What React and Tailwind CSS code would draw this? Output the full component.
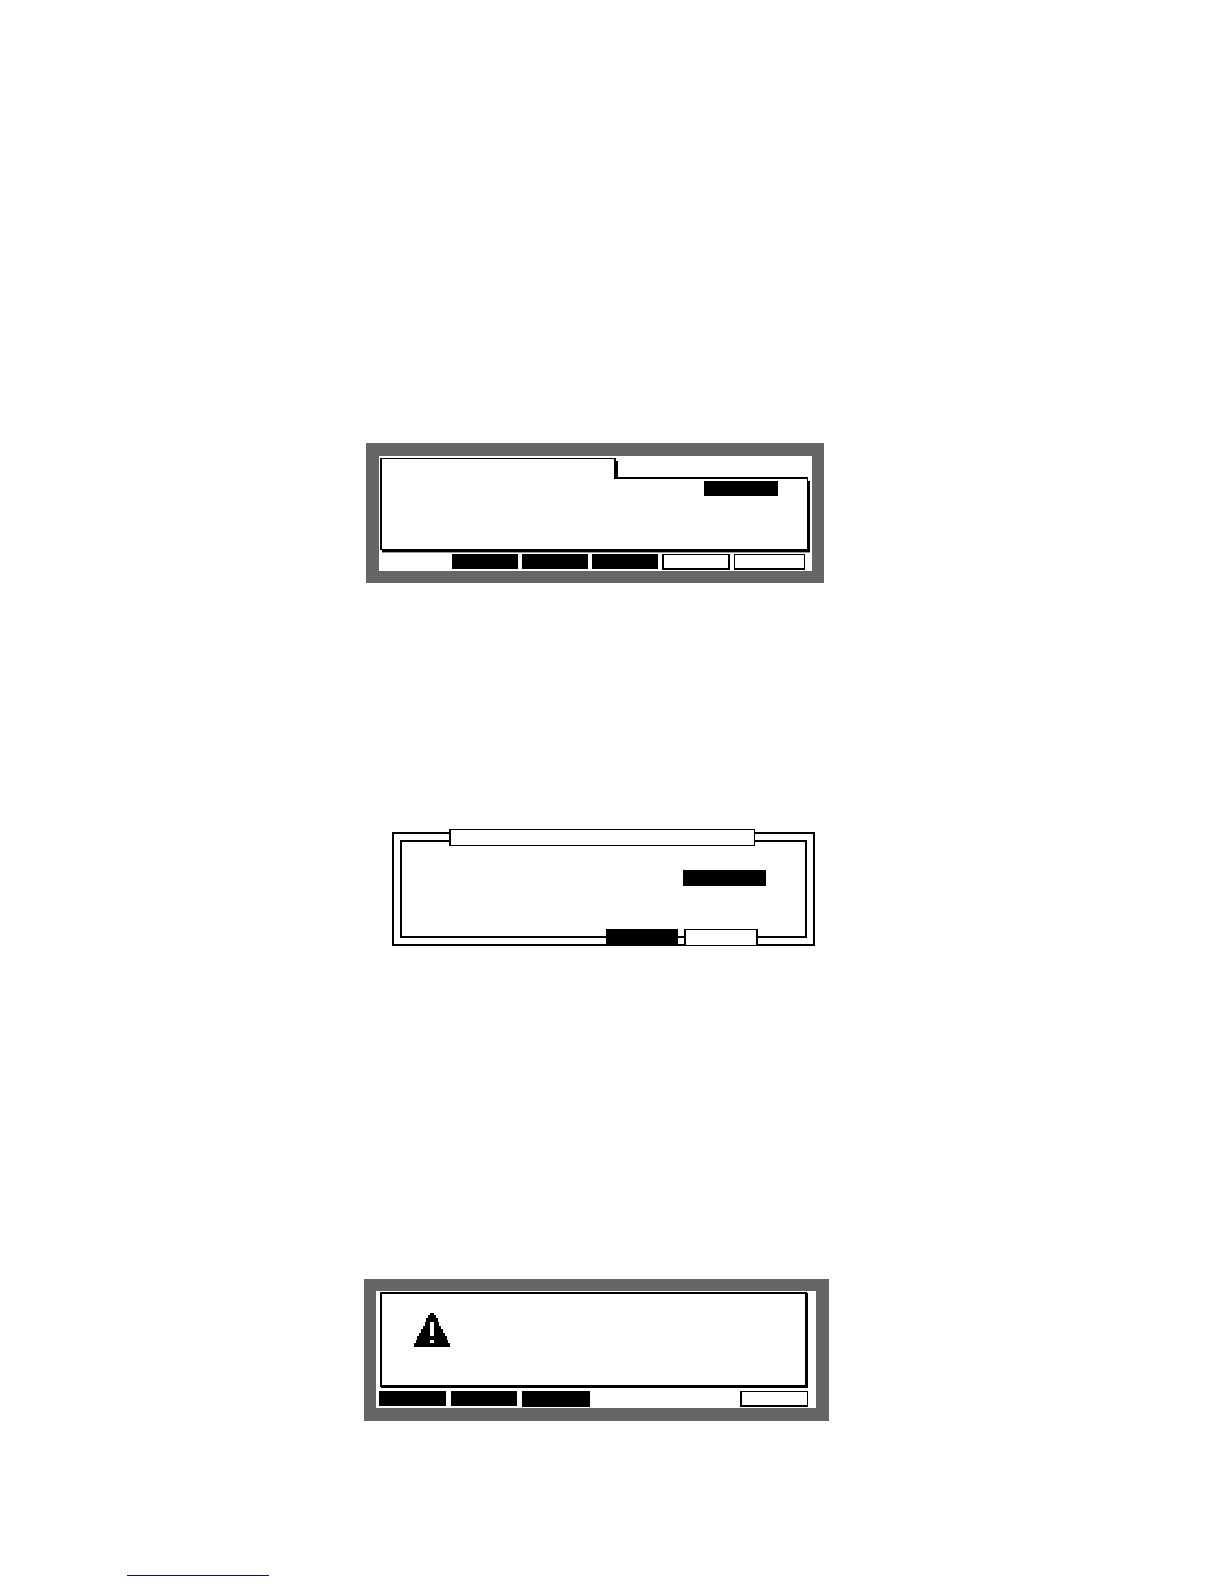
function SoftKey({ label, className = "" }) {
  return (
    <button
      type="button"
      aria-label={label}
      className={`block min-w-0 border-black ${className}`}
    />
  );
}

function ValueField({ label, className = "" }) {
  return (
    <input
      type="text"
      aria-label={label}
      className={`block bg-black text-white outline-none ${className}`}
    />
  );
}

function WarningIcon() {
  const steps = [
    [0, 2, 2],
    [2, 3, 4],
    [5, 4, 6],
    [9, 4, 7],
    [13, 3, 9],
    [16, 4, 11],
    [20, 3, 13],
    [23, 4, 15],
    [27, 3, 16],
    [30, 4, 18],
  ];
  return (
    <svg
      viewBox="0 0 36 34"
      width="36"
      height="34"
      role="img"
      aria-label="Warning"
      shapeRendering="crispEdges"
    >
      {steps.map(([y, h, half]) => (
        <rect key={y} x={18 - half} y={y} width={half * 2} height={h} fill="#000" />
      ))}
      <rect x="16" y="9" width="4" height="14" fill="#fff" />
      <rect x="16" y="27" width="4" height="3" fill="#fff" />
    </svg>
  );
}

function TabbedScreen() {
  return (
    <section
      aria-label="Tabbed page"
      className="ml-[2px] w-full max-w-[458px] border-[12px] border-t-[13px] border-l-[13px] border-[#666] bg-white pt-[2px] pr-[4px] pb-px pl-px"
    >
      <div className="flex flex-col">
        <div className="flex h-[21px]">
          <div className="w-[236px] border-t border-r-2 border-l-2 border-black bg-white shadow-[2px_3px_0_#000]" />
          <div className="flex-1 border-b-2 border-black" />
        </div>
        <div className="flex h-[71px] justify-end border-r border-b border-l-2 border-black bg-white pt-[2px] pr-[29px] shadow-[2px_2px_0_#000,2px_3px_0_#999]">
          <ValueField label="Value" className="h-[15px] w-[74px]" />
        </div>
      </div>
      <div className="mt-1 mr-[3px] ml-[72px] grid grid-cols-[66fr_66fr_66fr_68fr_71fr] gap-1">
        <SoftKey label="Page 2" className="h-[15px] bg-black" />
        <SoftKey label="Page 3" className="h-[15px] bg-black" />
        <SoftKey label="Page 4" className="h-[15px] bg-black" />
        <SoftKey label="Action 1" className="h-4 border-2 border-t bg-white" />
        <SoftKey label="Action 2" className="h-4 border border-b-2 bg-white" />
      </div>
    </section>
  );
}

function DialogBox() {
  return (
    <section
      aria-label="Dialog"
      className="mt-[246px] ml-[28px] grid w-full max-w-[423px] grid-cols-1"
    >
      <div className="col-start-1 row-start-1 mt-[3px] flex border-2 border-black bg-white p-[6px]">
        <div className="flex h-[98px] flex-1 justify-end border-2 border-black pt-[28px] pr-[39px]">
          <ValueField label="Selection" className="h-4 w-[83px]" />
        </div>
      </div>
      <div className="pointer-events-none col-start-1 row-start-1 flex flex-col justify-between pr-[57px] pl-[57px]">
        <div className="mr-[3px] h-[17px] border border-l-2 border-black bg-white" />
        <div className="pointer-events-auto flex justify-end gap-[6px]">
          <SoftKey label="Confirm" className="h-[17px] w-[72px] bg-black" />
          <SoftKey label="Cancel" className="h-[17px] w-[74px] border-x-2 border-y bg-white" />
        </div>
      </div>
    </section>
  );
}

function WarningScreen() {
  return (
    <section
      aria-label="Warning page"
      className="mt-[333px] w-full max-w-[465px] border-[12px] border-r-[13px] border-b-[13px] border-[#666] bg-white pt-px pb-px"
    >
      <div className="mr-[9px] ml-1 h-[95px] border-2 border-black bg-white pt-[19px] pl-8 shadow-[1px_1px_0_#000]">
        <WarningIcon />
      </div>
      <div className="mt-1 mr-2 ml-[3px] flex justify-between">
        <div className="flex gap-[5px]">
          <SoftKey label="Page 1" className="h-[15px] w-[67px] bg-black" />
          <SoftKey label="Page 2" className="h-[15px] w-[66px] bg-black" />
          <SoftKey label="Page 3" className="h-4 w-[68px] bg-black" />
        </div>
        <SoftKey
          label="Continue"
          className="h-4 w-[68px] border-t border-r border-b-2 border-l-2 bg-white"
        />
      </div>
    </section>
  );
}

export default function App() {
  return (
    <div className="flex min-h-screen flex-col bg-white pt-[443px] pb-2 font-['Liberation_Sans',sans-serif]">
      <main className="flex flex-col items-start pl-[364px]">
        <TabbedScreen />
        <DialogBox />
        <WarningScreen />
      </main>
      <footer className="mt-auto pt-[140px] pl-[127px]">
        <a
          href="#contents"
          aria-label="Contents"
          className="block h-[15px] w-[142px] border-b border-[#0c0c96]"
        />
      </footer>
    </div>
  );
}
